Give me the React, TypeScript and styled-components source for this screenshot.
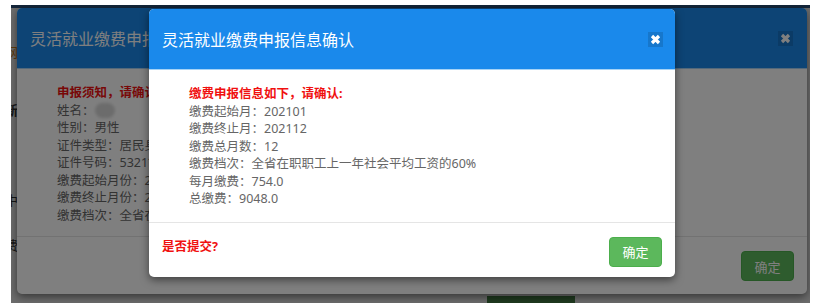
import styled, { createGlobalStyle } from 'styled-components';

const GlobalStyle = createGlobalStyle`
    html, body {
        margin: 0;
        padding: 0;
        background: #ffffff;
    }
    body {
        font-family: "Noto Sans", "Noto Sans CJK SC", sans-serif;
    }
`;

const Frame = styled.div`
    width: 818px;
    height: 303px;
    padding: 5px 0 0 11px;
    box-sizing: border-box;
`;

const Screen = styled.div`
    position: relative;
    width: 799px;
    height: 298px;
    overflow: hidden;
    background: #ffffff;
`;

/* page that sits behind both dialogs */
const Page = styled.div`
    display: flex;
    flex-direction: column;
    height: 100%;
`;

const PageBar = styled.div`
    height: 3px;
    background: #2f5a89;
`;

const PageSide = styled.div`
    display: flex;
    flex-direction: column;
    margin-left: -6px;
    font-size: 13px;
    line-height: 16px;
    color: #333;
`;

const SideItem = styled.div<{ $gap: number; $color?: string; $bold?: boolean }>`
    margin-top: ${(p) => p.$gap}px;
    color: ${(p) => p.$color || '#333'};
    font-weight: ${(p) => (p.$bold ? 700 : 400)};
`;

const PageFoot = styled.div`
    margin-top: auto;
    padding-left: 476px;
`;

const PageButton = styled.div`
    width: 88px;
    height: 7px;
    background: #4a8a4a;
`;

const Backdrop = styled.div<{ $alpha: number }>`
    position: absolute;
    inset: 0;
    background: rgba(0, 0, 0, ${(p) => p.$alpha});
`;

const Modal = styled.div<{ $left: number; $top: number; $width: number; $height: number }>`
    position: absolute;
    left: ${(p) => p.$left}px;
    top: ${(p) => p.$top}px;
    width: ${(p) => p.$width}px;
    height: ${(p) => p.$height}px;
    display: flex;
    flex-direction: column;
    background: #ffffff;
    border-radius: 5px;
    overflow: hidden;
    box-shadow: 0 3px 9px rgba(0, 0, 0, 0.5);
`;

const Header = styled.div<{ $pad: number }>`
    height: 61px;
    flex: none;
    display: flex;
    align-items: center;
    justify-content: space-between;
    padding: 0 ${(p) => p.$pad}px 0 14px;
    background: #1a89eb;
    border-bottom: 1px solid #a6d3f6;
    box-sizing: border-box;
`;

const Title = styled.div`
    color: #ffffff;
    font-family: "Noto Sans CJK SC", sans-serif;
    font-size: 16px;
    line-height: 20px;
    white-space: nowrap;
    margin-left: -1px;
`;

const Body = styled.div<{ $bottom: number }>`
    flex: none;
    padding: 15px 20px ${(p) => p.$bottom}px 40px;
    font-size: 12.5px;
    line-height: 17.5px;
    color: #666666;
    border-bottom: 1px solid #e5e5e5;
    white-space: nowrap;
`;

const Line = styled.div`
    display: flex;
    align-items: center;
`;

const Notice = styled.div`
    color: #f01010;
    font-weight: 700;
`;

const Blur = styled.span`
    display: inline-block;
    width: 20px;
    height: 15px;
    border-radius: 8px;
    background: #d8d8d8;
    filter: blur(1.5px);
`;

const Footer = styled.div`
    flex: 1;
    display: flex;
    justify-content: space-between;
    align-items: flex-start;
    padding: 14px 13px 0 13px;
`;

const Ask = styled.div`
    color: #f01010;
    font-weight: 700;
    font-size: 12.5px;
    line-height: 18px;
    padding-top: 1px;
`;

const OkButton = styled.button`
    margin-left: auto;
    width: 53px;
    height: 30px;
    padding: 0;
    border: 1px solid #4cae4c;
    border-radius: 4px;
    background: #5cb85c;
    color: #ffffff;
    font-family: "Noto Sans CJK SC", sans-serif;
    font-size: 13px;
    cursor: pointer;
`;

const CloseIcon = () => (
    <svg width="15" height="15" viewBox="0 0 15 15">
        <rect width="15" height="15" fill="rgba(0,0,0,0.13)" />
        <path d="M4 4 L11 11 M11 4 L4 11" stroke="#ffffff" strokeWidth="3.2" />
    </svg>
);

export default function App() {
    return (
        <Frame>
            <GlobalStyle />
            <Screen>
                <Page>
                    <PageBar />
                    <PageSide>
                        <SideItem $gap={36} $color="#e08a1e">网</SideItem>
                        <SideItem $gap={42} $bold>新</SideItem>
                        <SideItem $gap={74}>中</SideItem>
                        <SideItem $gap={29}>费</SideItem>
                    </PageSide>
                    <PageFoot>
                        <PageButton />
                    </PageFoot>
                </Page>
                <Backdrop $alpha={0.15} />

                <Modal $left={6} $top={3} $width={790} $height={286}>
                    <Header $pad={14}>
                        <Title>灵活就业缴费申报信息</Title>
                        <CloseIcon />
                    </Header>
                    <Body $bottom={12}>
                        <Notice>申报须知，请确认：</Notice>
                        <Line>
                            姓名：<Blur />
                        </Line>
                        <Line>性别：男性</Line>
                        <Line>证件类型：居民身份证</Line>
                        <Line>证件号码：5321**********0012</Line>
                        <Line>缴费起始月份：202101</Line>
                        <Line>缴费终止月份：202112</Line>
                        <Line>缴费档次：全省在职职工上一年社会平均工资的60%</Line>
                    </Body>
                    <Footer>
                        <OkButton>确定</OkButton>
                    </Footer>
                </Modal>

                <Backdrop $alpha={0.5} />

                <Modal $left={138} $top={4} $width={526} $height={268}>
                    <Header $pad={12}>
                        <Title>灵活就业缴费申报信息确认</Title>
                        <CloseIcon />
                    </Header>
                    <Body $bottom={14}>
                        <Notice>缴费申报信息如下，请确认:</Notice>
                        <Line>缴费起始月：202101</Line>
                        <Line>缴费终止月：202112</Line>
                        <Line>缴费总月数：12</Line>
                        <Line>缴费档次：全省在职职工上一年社会平均工资的60%</Line>
                        <Line>每月缴费：754.0</Line>
                        <Line>总缴费：9048.0</Line>
                    </Body>
                    <Footer>
                        <Ask>是否提交?</Ask>
                        <OkButton>确定</OkButton>
                    </Footer>
                </Modal>
            </Screen>
        </Frame>
    );
}
